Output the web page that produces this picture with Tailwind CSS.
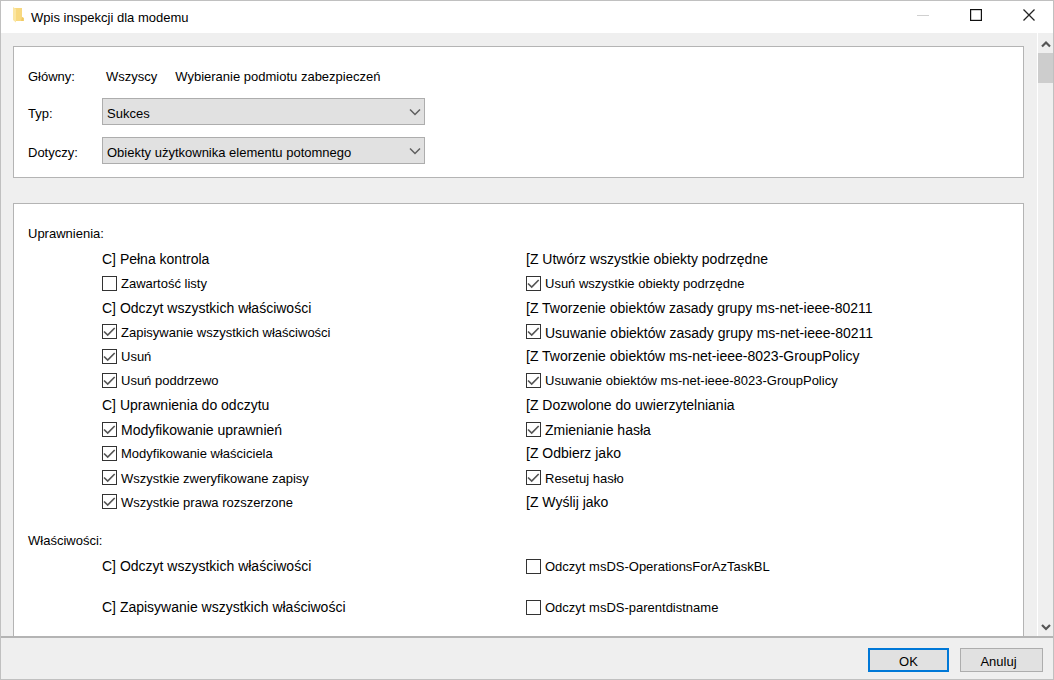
<!DOCTYPE html>
<html lang="pl">
<head>
<meta charset="utf-8">
<title>Wpis inspekcji dla modemu</title>
<script src="https://cdn.jsdelivr.net/npm/@tailwindcss/browser@4"></script>
</head>
<body class="font-['Liberation_Sans',Arial,sans-serif] text-[13px] leading-5 text-black">
<div class="flex h-screen flex-col border border-[#c0c0c0] bg-[#efefef]">
  <header class="flex h-8 shrink-0 items-center bg-white pl-3">
    <svg class="-mt-1 mr-[7px] h-4 w-[11px]" viewBox="0 0 11 16" aria-hidden="true">
      <path d="M1 1h8v9l2 1v3H2L1 13z" fill="#f8d980"/>
      <path d="M0 0l3 2v13.500L0 13z" fill="#fbe6a2"/>
      <path d="M9 10l1.500 1v3H8z" fill="#efc965"/>
    </svg>
    <h1 class="flex-1 pt-[2px]">Wpis inspekcji dla modemu</h1>
    <div class="-mt-1 flex items-center">
      <button class="flex h-7 w-[53px] items-center justify-center" aria-label="Minimalizuj" disabled>
        <svg class="h-3 w-3" viewBox="0 0 12 12"><path d="M0 6.5h12" stroke="#d0d0d0"/></svg>
      </button>
      <button class="flex h-7 w-[53px] items-center justify-center" aria-label="Maksymalizuj">
        <svg class="h-3 w-3" viewBox="0 0 12 12"><rect x=".6" y=".6" width="10.8" height="10.8" fill="none" stroke="#111" stroke-width="1.2"/></svg>
      </button>
      <button class="flex h-7 w-[51px] items-center justify-center pl-[3px]" aria-label="Zamknij">
        <svg class="h-3 w-3" viewBox="0 0 12 12"><path d="M.5.5l11 11M11.500.5l-11 11" stroke="#222" stroke-width="1.300"/></svg>
      </button>
    </div>
  </header>

  <div class="flex min-h-0 flex-1">
    <main class="min-w-0 flex-1 overflow-hidden pl-3 pr-[13px] pt-[13px]">
      <section class="grid grid-cols-[74px_1fr] items-center gap-y-3 border border-[#b4b4b4] bg-white pb-[13px] pl-[14px] pt-[19px]">
        <span class="h-5 pt-px">Główny:</span>
        <div class="flex h-5 gap-[18px] pl-1 pt-px"><span>Wszyscy</span><a href="#">Wybieranie podmiotu zabezpieczeń</a></div>
        <label for="type" class="pt-1">Typ:</label>
        <div class="relative w-[323px]">
          <select id="type" class="block h-[27px] w-full appearance-none border border-[#adadad] bg-[#e1e1e1] pl-1 pr-6 pt-1"><option>Sukces</option></select>
          <svg class="pointer-events-none absolute right-1 top-[11px] h-[7px] w-3" viewBox="0 0 12 7"><path d="M1 .5l5 5 5-5" fill="none" stroke="#606060" stroke-width="1.500"/></svg>
        </div>
        <label for="scope" class="pt-1">Dotyczy:</label>
        <div class="relative w-[323px]">
          <select id="scope" class="block h-[27px] w-full appearance-none border border-[#adadad] bg-[#e1e1e1] pl-1 pr-6 pt-1"><option>Obiekty użytkownika elementu potomnego</option></select>
          <svg class="pointer-events-none absolute right-1 top-[11px] h-[7px] w-3" viewBox="0 0 12 7"><path d="M1 .5l5 5 5-5" fill="none" stroke="#606060" stroke-width="1.500"/></svg>
        </div>
      </section>

      <section class="mt-[25px] border border-[#b4b4b4] bg-white pb-8 pl-[14px] pt-5">
        <h2>Uprawnienia:</h2>
        <div id="permissions" class="mt-[3px] grid h-[267px] auto-rows-fr grid-cols-[424px_1fr] items-center pl-[74px]"></div>
        <h2 class="mt-[17px]">Właściwości:</h2>
        <div id="properties" class="mt-[5px] grid auto-rows-[20px] grid-cols-[424px_1fr] items-center gap-y-[21px] pl-[74px]"></div>
      </section>
    </main>

    <div class="flex w-4 flex-col items-center border-l border-white" role="scrollbar" aria-controls="permissions" aria-valuenow="0" aria-orientation="vertical">
      <div class="flex h-5 w-full items-center justify-center pl-px pt-px"><svg class="h-2 w-[10px]" viewBox="0 0 10 8"><path d="M1 6.500l4-4 4 4" fill="none" stroke="#555" stroke-width="2.200"/></svg></div>
      <div class="h-[30px] w-full bg-[#cdcdcd]"></div>
      <div class="flex-1"></div>
      <div class="flex h-5 w-full items-center justify-center pl-px pt-px"><svg class="h-2 w-[10px]" viewBox="0 0 10 8"><path d="M1 2l4 4 4-4" fill="none" stroke="#555" stroke-width="2.200"/></svg></div>
    </div>
  </div>

  <footer class="flex h-[43px] shrink-0 items-start justify-end gap-[11px] border-t-2 border-[#b4b4b4] pr-[10px] pt-[10px]">
    <button class="h-6 w-[81px] border-2 border-[#0078d7] bg-[#e1e1e1] pt-[2px] leading-5">OK</button>
    <button class="h-6 w-[83px] border border-[#adadad] bg-[#e1e1e1] pr-[6px] pt-[3px] leading-5">Anuluj</button>
  </footer>
</div>

<script>
  // Row: [text, state]; "text" is a plain line, "off" an empty box, "on" a ticked box, "large" a ticked box with larger text.
  const permissions = [
    ["C] Pełna kontrola", "text"], ["[Z Utwórz wszystkie obiekty podrzędne", "text"],
    ["Zawartość listy", "off"], ["Usuń wszystkie obiekty podrzędne", "on"],
    ["C] Odczyt wszystkich właściwości", "text"], ["[Z Tworzenie obiektów zasady grupy ms-net-ieee-80211", "text"],
    ["Zapisywanie wszystkich właściwości", "on"], ["Usuwanie obiektów zasady grupy ms-net-ieee-80211", "large"],
    ["Usuń", "on"], ["[Z Tworzenie obiektów ms-net-ieee-8023-GroupPolicy", "text"],
    ["Usuń poddrzewo", "on"], ["Usuwanie obiektów ms-net-ieee-8023-GroupPolicy", "on"],
    ["C] Uprawnienia do odczytu", "text"], ["[Z Dozwolone do uwierzytelniania", "text"],
    ["Modyfikowanie uprawnień", "large"], ["Zmienianie hasła", "large"],
    ["Modyfikowanie właściciela", "on"], ["[Z Odbierz jako", "text"],
    ["Wszystkie zweryfikowane zapisy", "on"], ["Resetuj hasło", "on"],
    ["Wszystkie prawa rozszerzone", "on"], ["[Z Wyślij jako", "text"],
  ];
  const properties = [
    ["C] Odczyt wszystkich właściwości", "text"], ["Odczyt msDS-OperationsForAzTaskBL", "off"],
    ["C] Zapisywanie wszystkich właściwości", "text"], ["Odczyt msDS-parentdistname", "off"],
  ];
  const row = ([text, state]) => state === "text"
    ? `<span class="text-[14px]">${text}</span>`
    : `<label class="flex items-center gap-1"><span class="relative block h-[15px] w-[15px] shrink-0">
        <input type="checkbox" class="peer block h-[15px] w-[15px] appearance-none border border-[#333] bg-white" ${state === "off" ? "" : "checked"}>
        <svg class="pointer-events-none absolute left-0 top-0 hidden h-[15px] w-[15px] peer-checked:block" viewBox="0 0 15 15"><path d="M2 7.500l3.700 3.500 7-7" fill="none" stroke="#555" stroke-width="1.700"/></svg>
      </span><span class="pt-[2px] ${state === "large" ? "text-[14px]" : "text-[13px]"}">${text}</span></label>`;
  document.getElementById("permissions").innerHTML = permissions.map(row).join("");
  document.getElementById("properties").innerHTML = properties.map(row).join("");
</script>
</body>
</html>
